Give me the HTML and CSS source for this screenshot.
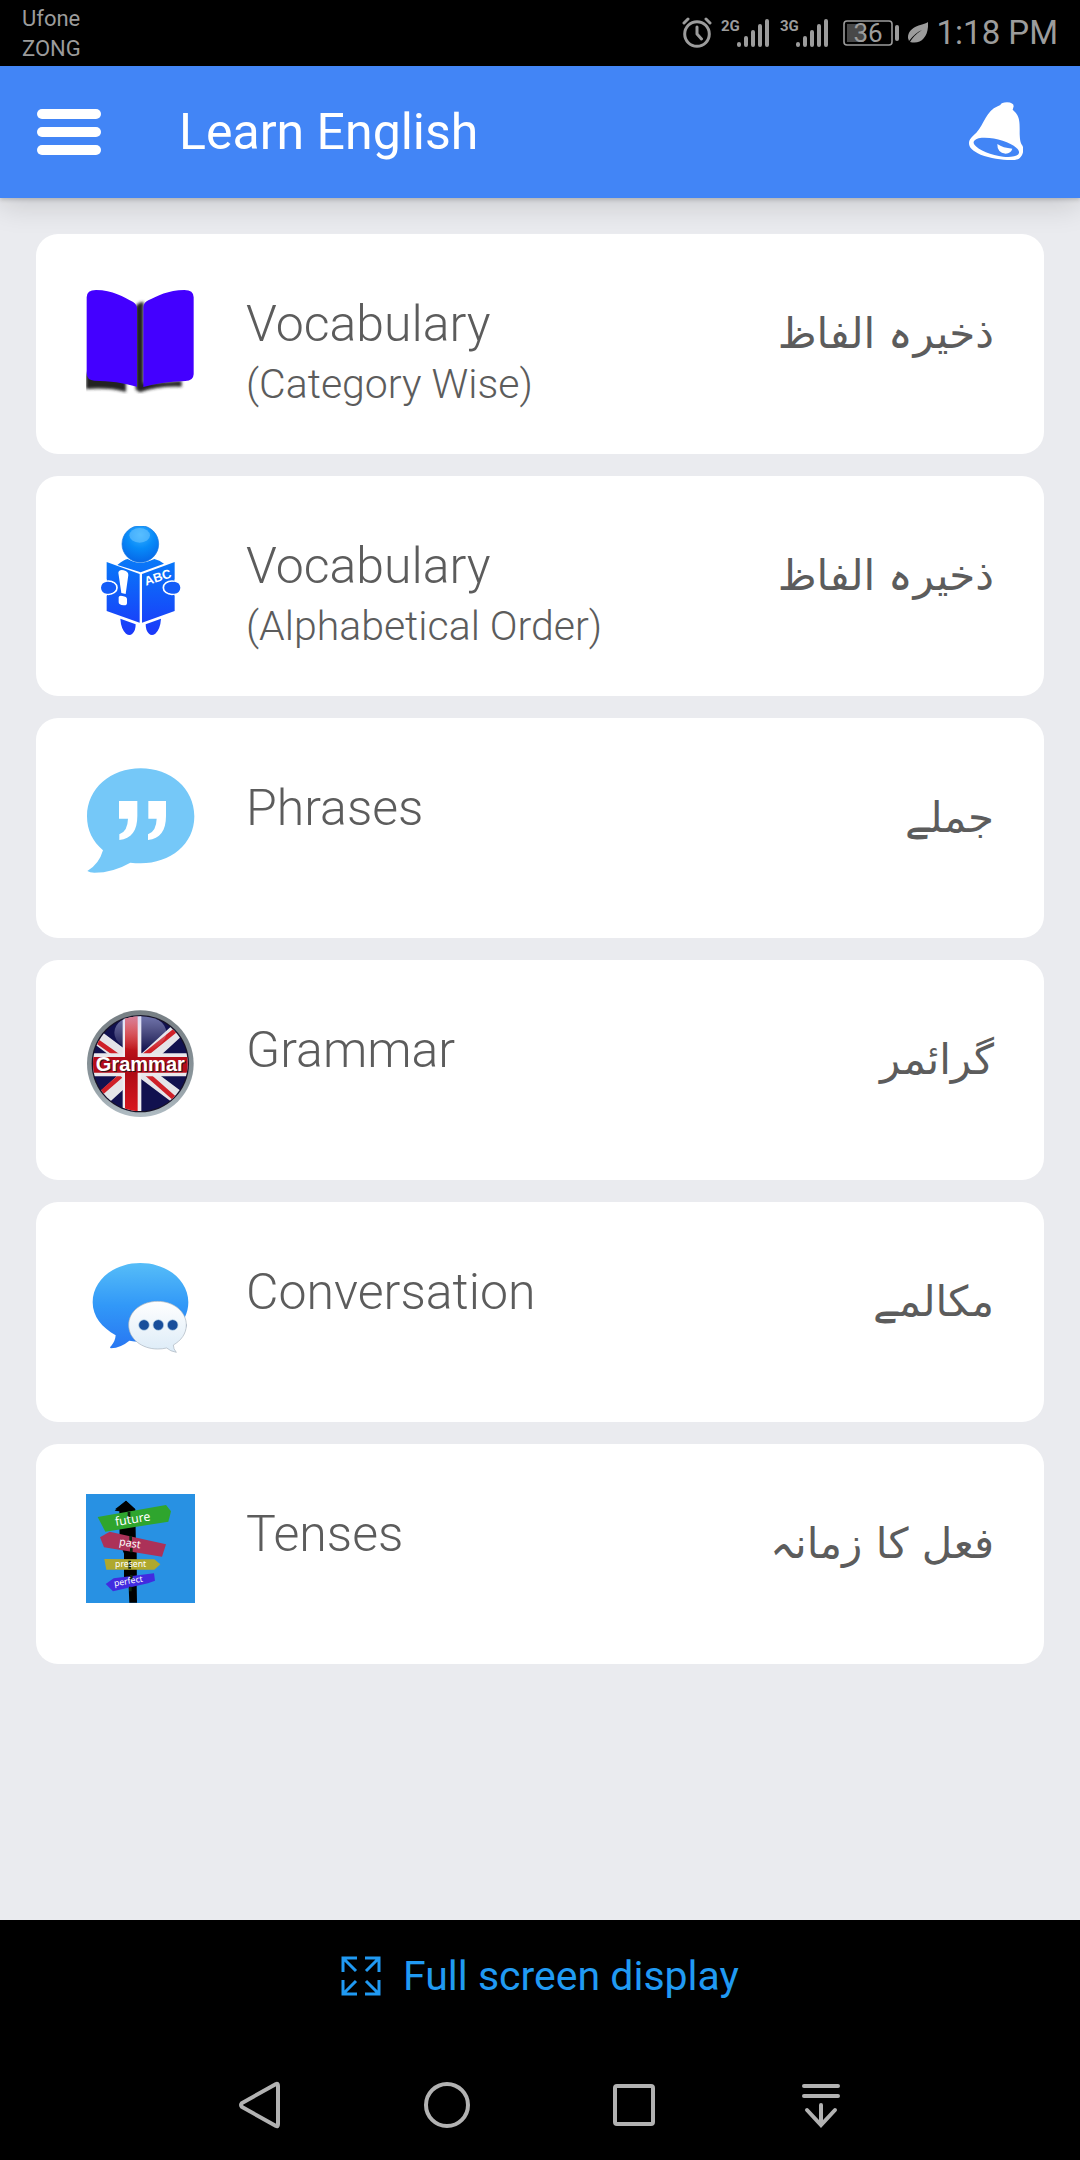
FILE: index.html
```html
<!DOCTYPE html>
<html lang="en">
<head>
<meta charset="utf-8">
<meta name="viewport" content="width=device-width, initial-scale=1">
<title>Learn English</title>
<link rel="stylesheet" href="styles.css">
</head>
<body>
<div class="status">
  <div class="carriers"><span>Ufone</span><span>ZONG</span></div>
  <div class="indicators">
    <svg class="glyph" width="30" height="32" viewBox="0 0 30 32" fill="none" stroke="currentColor" stroke-width="3" stroke-linecap="round" stroke-linejoin="round"><circle cx="15" cy="17" r="12.3"/><path d="M15 10v7l4.500 5M2 6l4-4M28 6l-4-4"/></svg>
    <svg class="glyph" width="50" height="32" viewBox="0 0 50 32" fill="none" stroke="currentColor" stroke-width="4" stroke-linecap="round"><text class="net" x="0" y="14">2G</text><path d="M18 27v1M25 21v7M32 15v13M39 9v19M46 4v24"/></svg>
    <svg class="glyph" width="50" height="32" viewBox="0 0 50 32" fill="none" stroke="currentColor" stroke-width="4" stroke-linecap="round"><text class="net" x="0" y="14">3G</text><path d="M18 27v1M25 21v7M32 15v13M39 9v19M46 4v24"/></svg>
    <svg class="glyph battery" width="56" height="32" viewBox="0 0 56 32"><rect x="1" y="4" width="48" height="24" rx="3" fill="none" stroke="currentColor" stroke-width="1.600"/><path d="M4 7h17v18H4z" fill="#484848"/><rect x="52" y="8" width="4" height="16" rx="2" fill="currentColor"/><text class="level" x="25" y="25" text-anchor="middle">36</text></svg>
    <svg class="glyph" width="20" height="32" viewBox="1 0 20 32"><path d="M21 5C18 8 1 8 1 21l1 3Q8 16 15 13 7 18 3 25C14 28 22 20 21 5z" fill="currentColor"/></svg>
    <span class="clock">1:18 PM</span>
  </div>
</div>

<header class="appbar">
  <button class="icon-button" type="button" aria-label="Menu">
    <svg width="64" height="48" viewBox="0 0 64 48" fill="currentColor"><rect y="1" width="64" height="10" rx="5"/><rect y="19" width="64" height="10" rx="5"/><rect y="37" width="64" height="10" rx="5"/></svg>
  </button>
  <h1 class="title">Learn English</h1>
  <button class="icon-button" type="button" aria-label="Notifications">
    <svg width="54" height="60" viewBox="0 0 162 180"><path d="M94 9q3-8 20-8 20 1 20 12l-3 10c23 19 21 39 21 73 1 20 2 26 9 36 4 14 1 30-11 38-12 8-73 4-115-12C10 147 0 136 0 124c0-14 11-21 22-32C46 66 52 26 86 13z" fill="#fff"/><ellipse cx="82" cy="136" rx="70" ry="24" transform="rotate(14 82 136)" fill="#4285f6"/><path d="M85 126q17 12 45 14-4 14-20 15-26-3-25-29z" fill="#fff"/></svg>
  </button>
</header>

<main class="content">
  <ul class="lessons">
    <li><a class="card" href="#vocabulary-category">
      <svg class="picture" viewBox="78 72 330 330">
        <defs><filter id="soft" x="-10%" y="-10%" width="120%" height="120%"><feGaussianBlur stdDeviation="5"/></filter></defs>
        <g fill="#222" filter="url(#soft)"><path d="M78 340h120v56q-50-14-120-9z"/><path d="M226 140q10-16 25-14V370l114-8v18q-70-3-125 17l-13-8z"/></g>
        <path d="M80 112q0-22 28-22c50 0 84 22 110 35q12 6 13 20v235q-60-18-128-18-22 0-23-22zM401 112q0-22-28-22c-48 0-82 18-108 31q-14 7-15 20v240q50-15 126-18 24 0 25-20z" fill="#4300ff"/>
      </svg>
      <span class="name">Vocabulary<small class="note">(Category Wise)</small></span>
      <span class="urdu" lang="ur" dir="rtl">ذخیرہ الفاظ</span>
    </a></li>
    <li><a class="card" href="#vocabulary-alphabetical">
      <svg class="picture" viewBox="48 48 330 330">
        <defs>
          <linearGradient id="body" gradientUnits="userSpaceOnUse" x1="0" y1="150" x2="0" y2="375"><stop offset="0" stop-color="#0879f8"/><stop offset="1" stop-color="#1b38fa"/></linearGradient>
          <radialGradient id="head" cx="50%" cy="25%" r="75%"><stop offset="0" stop-color="#35b0ff"/><stop offset=".5" stop-color="#078af8"/><stop offset="1" stop-color="#0668e8"/></radialGradient>
        </defs>
        <g fill="url(#body)">
          <path d="M142 165q20-16 31-18 35 22 80 0 16 4 29 14l-70 26z"/>
          <path d="M110 156l99 36v146l-99-35zM314 156l-98 36v146l98-35z"/>
          <path d="M151 326l46 17q0 20-10 28-8 8-19 0-15-14-17-45zM273 326l-46 17q0 20 10 28 8 8 19 0 15-14 17-45z"/>
          <ellipse cx="115" cy="233" rx="26" ry="20" stroke="#fff" stroke-width="5"/>
          <ellipse cx="306" cy="233" rx="26" ry="20" stroke="#fff" stroke-width="5"/>
        </g>
        <path d="M88 208h22v50H88zM314 208h21v50h-21z" fill="#fff"/>
        <path d="M111 215q-17 2-18 18 1 16 18 18 26-2 26-18t-26-18zM313 215q17 2 18 18-1 16-18 18-28-2-28-18t28-18z" fill="#145cf8"/>
        <circle cx="211" cy="102" r="55" fill="url(#head)" stroke="#1677df" stroke-width="2"/>
        <ellipse cx="209" cy="76" rx="31" ry="22" fill="#79cbff" opacity=".5"/>
        <path d="M145 188q2-10 16-7 14 3 14 14l-8 57-13-3zM146 262q0-6 11-4 14 2 14 9v12q0 8-10 7-15-1-15-9z" fill="#fff"/>
        <text class="abc" x="228" y="227" transform="rotate(-18 228 227)">ABC</text>
      </svg>
      <span class="name">Vocabulary<small class="note">(Alphabetical Order)</small></span>
      <span class="urdu" lang="ur" dir="rtl">ذخیرہ الفاظ</span>
    </a></li>
    <li><a class="card" href="#phrases">
      <svg class="picture" viewBox="48 39 330 330">
        <path d="M212 40c89 0 161 60 161 144s-72 141-161 141q-16 0-31-2-52 30-108 30-14 0-21-5 35-20 47-62C68 260 51 226 51 184 51 100 123 40 212 40z" fill="#75c8f8"/>
        <path d="M147 138h55v45c0 43-18 69-54 72v-17q25-9 26-47h-27zM235 138h53v45c0 43-18 69-54 72v-17q25-9 26-47h-25z" fill="#fff"/>
      </svg>
      <span class="name">Phrases</span>
      <span class="urdu" lang="ur" dir="rtl">جملے</span>
    </a></li>
    <li><a class="card" href="#grammar">
      <svg class="picture" viewBox="48 30 330 330">
        <defs>
          <clipPath id="disc"><circle cx="211" cy="191" r="142"/></clipPath>
          <linearGradient id="rim" x1="0" y1="0" x2="0" y2="1"><stop offset="0" stop-color="#777f84"/><stop offset=".6" stop-color="#89949a"/><stop offset="1" stop-color="#b1bdc4"/></linearGradient>
          <linearGradient id="red" x1="0" y1="0" x2="0" y2="1"><stop offset="0" stop-color="#ef302c"/><stop offset=".5" stop-color="#a60812"/><stop offset="1" stop-color="#df1820"/></linearGradient>
          <linearGradient id="gloss" x1="0" y1="0" x2="0" y2="1"><stop offset="0" stop-color="#bfc8ff" stop-opacity=".55"/><stop offset="1" stop-color="#fff" stop-opacity="0"/></linearGradient>
        </defs>
        <circle cx="211" cy="191" r="160" fill="url(#rim)"/>
        <circle cx="211" cy="191" r="146" fill="#171327"/>
        <g clip-path="url(#disc)">
          <path d="M60 40h310v310H60z" fill="#11114f"/>
          <path d="M50 88L330 298M90 304L330 84" stroke="#e4e4e8" stroke-width="43"/>
          <path d="M62 110L150 172M228 220L330 310M90 282L152 228M222 167L330 80" stroke="#cf2028" stroke-width="14"/>
          <path d="M60 160h302v69H60z" fill="#e9e7eb"/>
          <path d="M158 40h56v310h-56z" fill="#f0eef0"/>
          <path d="M60 171h302v47H60z" fill="#b50d19"/>
          <path d="M165 40h38v310h-38z" fill="url(#red)"/>
          <ellipse cx="211" cy="98" rx="78" ry="54" fill="url(#gloss)"/>
        </g>
        <text class="badge-shadow" x="214" y="216" text-anchor="middle">Grammar</text>
        <text class="badge-text" x="211" y="213" text-anchor="middle">Grammar</text>
      </svg>
      <span class="name">Grammar</span>
      <span class="urdu" lang="ur" dir="rtl">گرائمر</span>
    </a></li>
    <li><a class="card" href="#conversation">
      <svg class="picture" viewBox="48 36 330 330">
        <defs>
          <linearGradient id="bubble" x1="0" y1="0" x2="0" y2="1"><stop offset="0" stop-color="#56bdf8"/><stop offset=".5" stop-color="#3198f8"/><stop offset="1" stop-color="#2877f2"/></linearGradient>
          <linearGradient id="reply" x1="0" y1="0" x2="0" y2="1"><stop offset="0" stop-color="#fff"/><stop offset="1" stop-color="#dcebf7"/></linearGradient>
        </defs>
        <path d="M211 69c79 0 144 51 144 118 0 66-62 118-144 118q-18 0-33-3-25 21-55 23-6-1 1-8 12-14 13-31c-41-23-69-56-69-99C68 120 132 69 211 69z" fill="url(#bubble)"/>
        <path d="M176 245c0 35 22 61 52 75 50 8 108-10 123-65l-40-50-80-15q-48 15-55 55z" fill="#183d70" opacity=".4"/>
        <path d="M263 184c48 0 86 31 86 71 0 26-16 47-39 60q0 12 9 22-18-3-29-13-13 3-27 3c-48 0-87-31-87-72s39-71 87-71z" fill="url(#reply)" stroke="#a7b2bd" stroke-width="2"/>
        <g fill="#184e9b" stroke="#b9d4e9" stroke-width="2"><circle cx="222" cy="255" r="16"/><circle cx="265" cy="255" r="16"/><circle cx="308" cy="255" r="16"/></g>
      </svg>
      <span class="name">Conversation</span>
      <span class="urdu" lang="ur" dir="rtl">مکالمے</span>
    </a></li>
    <li><a class="card" href="#tenses">
      <svg class="picture" viewBox="48 42 330 330">
        <path d="M48 42h327v327H48z" fill="#2891e3"/>
        <path d="M168 62l28 26v12l5 268h-23l-5-120-24-60-1-94-14-2z" fill="#000"/>
        <path d="M135 88l33-26 28 26zM162 180h38v130h-38z" fill="#000"/>
        <path d="M83 111l205-36 15 19-8 31-189 30z" fill="#2fa52e"/>
        <path d="M90 172l29-17 169 38-12 37-174-28z" fill="#ac3158"/>
        <path d="M103 237l150 1 18 15-18 16H109z" fill="#afa82e"/>
        <path d="M107 312l24-17 121-15 3 22-21 8-105 24z" fill="#412be0"/>
        <path d="M177 96v20M182 168v14M184 204v13M179 242v24M184 285v14M181 320v14" stroke="#102510" stroke-width="8"/>
        <text class="sign sign-large" x="188" y="130" text-anchor="middle" transform="rotate(-9 188 118)">future</text>
        <text class="sign sign-medium" x="180" y="200" text-anchor="middle" transform="rotate(9 180 190)">past</text>
        <text class="sign sign-small" x="182" y="261" text-anchor="middle">present</text>
        <text class="sign sign-small" x="175" y="312" text-anchor="middle" transform="rotate(-9 175 303)">perfect</text>
      </svg>
      <span class="name">Tenses</span>
      <span class="urdu" lang="ur" dir="rtl">فعل کا زمانہ</span>
    </a></li>
  </ul>
</main>

<footer class="system">
  <button class="fullscreen" type="button">
    <svg width="40" height="40" viewBox="0 0 40 40" fill="none" stroke="currentColor" stroke-width="3"><path d="M2 16V2h14M2 2l13 13M24 2h14v14M38 2L25 15M2 24v14h14M2 38l13-13M38 24v14H24M38 38L25 25"/></svg>
    Full screen display
  </button>
  <nav class="navigation" aria-label="System">
    <button class="key" type="button" aria-label="Back"><svg width="48" height="48" viewBox="0 0 48 48"><path d="M40 3q2-1 2 2v38q0 3-2 2L6 26q-2-2 0-4z"/></svg></button>
    <button class="key" type="button" aria-label="Home"><svg width="48" height="48" viewBox="0 0 48 48"><circle cx="24" cy="24" r="21"/></svg></button>
    <button class="key" type="button" aria-label="Recent apps"><svg width="48" height="48" viewBox="0 0 48 48"><rect x="5" y="5" width="38" height="38" rx="2"/></svg></button>
    <button class="key" type="button" aria-label="Hide navigation"><svg width="48" height="48" viewBox="0 0 48 48"><path d="M7 5h34M7 15h34M24 24v20M10 29l14 15 14-15"/></svg></button>
  </nav>
</footer>
</body>
</html>
```
FILE: styles.css
```css
* { box-sizing: border-box; }

body {
  margin: 0;
  min-height: 100vh;
  display: flex;
  flex-direction: column;
  background: #eaebef;
  color: #5c5c5c;
  font-family: Roboto, "DejaVu Sans", sans-serif;
}

svg { display: block; flex: none; }

button {
  border: 0;
  padding: 0;
  background: none;
  color: inherit;
  font: inherit;
  cursor: pointer;
}

.status {
  display: flex;
  align-items: center;
  justify-content: space-between;
  min-height: 66px;
  padding: 2px 22px;
  background: #000;
  color: #9c9c9c;
}

.carriers {
  display: flex;
  flex-direction: column;
  padding-top: 2px;
  font-size: 22px;
  line-height: 30px;
}

.indicators {
  display: flex;
  align-items: center;
  gap: 9px;
}

.battery { margin-left: 4px; }

.clock { font-size: 33px; line-height: 40px; }

.net {
  fill: currentColor;
  stroke: none;
  font-size: 15px;
  font-weight: 700;
}

.level { fill: currentColor; font-size: 26px; }

.appbar {
  position: relative;
  display: flex;
  align-items: center;
  min-height: 132px;
  padding: 0 57px 0 37px;
  background: #4285f6;
  color: #fff;
  box-shadow: 0 2px 4px rgba(0, 0, 0, .16), 0 8px 28px rgba(0, 0, 0, .14);
}

.title {
  flex: 1;
  margin: 0;
  padding-left: 78px;
  font-size: 50px;
  font-weight: 400;
  line-height: 60px;
}

.content { flex: 1; padding: 36px; }

.lessons {
  display: flex;
  flex-direction: column;
  gap: 22px;
  margin: 0;
  padding: 0;
  list-style: none;
}

.card {
  display: flex;
  align-items: flex-start;
  gap: 50px;
  min-height: 220px;
  padding: 50px 50px 36px;
  border-radius: 22px;
  background: #fff;
  color: inherit;
  text-decoration: none;
}

.picture { width: 110px; height: 110px; }

.name {
  flex: 1;
  padding-top: 10px;
  font-size: 50px;
  font-weight: 300;
  line-height: 60px;
}

.note { display: block; font-size: 41px; }

.urdu {
  padding-top: 20px;
  font-family: "DejaVu Sans", sans-serif;
  font-size: 42px;
  line-height: 60px;
}

.abc {
  fill: #fff;
  font-family: "Liberation Sans", sans-serif;
  font-size: 38px;
  font-weight: 700;
}

.badge-text,
.badge-shadow {
  font-family: "Liberation Sans", sans-serif;
  font-size: 60px;
  font-weight: 700;
}

.badge-text { fill: #fff; }
.badge-shadow { fill: #38141c; }

.sign { fill: #fff; font-family: "Noto Sans", sans-serif; }
.sign-large { font-size: 37px; }
.sign-medium { font-size: 32px; }
.sign-small { font-size: 26px; }

.system {
  display: flex;
  flex-direction: column;
  justify-content: space-between;
  min-height: 240px;
  padding: 26px 0 19px;
  background: #000;
}

.fullscreen {
  display: flex;
  align-items: center;
  align-self: center;
  gap: 22px;
  color: #209af3;
  font-size: 41px;
  line-height: 60px;
}

.navigation { display: flex; justify-content: center; }

.key {
  display: flex;
  flex: 0 1 187px;
  align-items: center;
  justify-content: center;
  height: 72px;
  color: #b2b2b2;
}

.key svg {
  fill: none;
  stroke: currentColor;
  stroke-width: 4;
  stroke-linecap: round;
}
```
